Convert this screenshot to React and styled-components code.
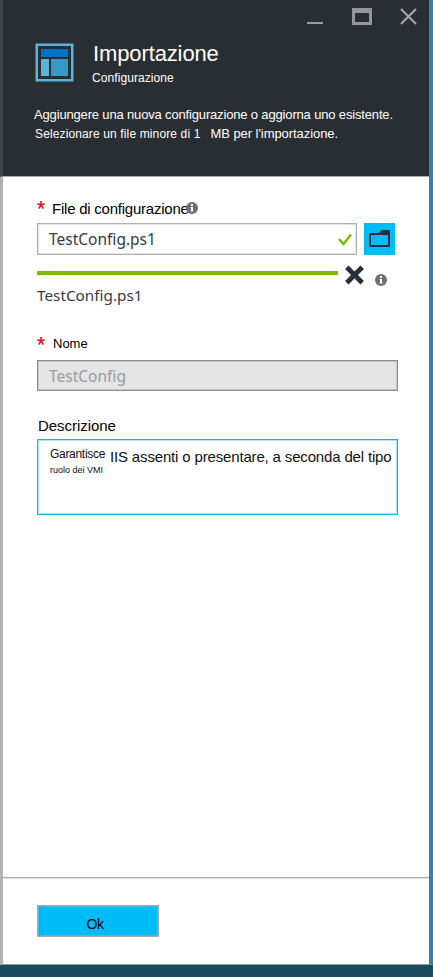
import React from "react";
import styled, { createGlobalStyle } from "styled-components";

const GlobalStyle = createGlobalStyle`
  * { box-sizing: border-box; }
  body { margin: 0; font-family: "Liberation Sans", Arial, sans-serif; }
  svg { display: block; flex: none; }
`;

const Page = styled.div`
  width: 433px;
  height: 977px;
  display: flex;
  flex-direction: column;
  overflow: hidden;
  background: #1b4b63;
`;

const Blade = styled.main`
  height: 965px;
  display: flex;
  flex-direction: column;
  border-left: 3px solid #b2b2b2;
  border-right: 4px solid #3780a7;
  border-bottom: 1px solid #8f9a9d;
  background: #fff;
`;

const Header = styled.header`
  height: 177px;
  margin-left: -3px;
  padding: 7px 11px 0 32px;
  border-left: 3px solid #414649;
  border-bottom: 1px solid #aaa;
  background: #292e32;
  color: #fff;
`;

const WindowControls = styled.div`
  height: 19px;
  display: flex;
  justify-content: flex-end;
`;

const TitleRow = styled.div`
  display: flex;
  height: 40px;
  margin-top: 17px;
`;

const TitleText = styled.div`
  display: flex;
  flex-direction: column;
  margin-left: 18px;
`;

const Text = styled.span`
  display: block;
  white-space: pre;
  font-size: ${(p) => p.$size}px;
  line-height: ${(p) => p.$line || 16}px;
  letter-spacing: ${(p) => p.$spacing || 0}px;
  margin-left: ${(p) => p.$indent || 0}px;
`;

const Intro = styled.div`
  margin: 24px 0 0 -1px;
`;

const IntroLine = styled.div`
  display: flex;
  height: 19px;
`;

const Form = styled.section`
  height: 701px;
  padding: 22px 31px 0 34px;
  border-bottom: 1px solid #adadad;
  box-shadow: 0 1px 0 #dedede;
`;

const LabelRow = styled.div`
  display: flex;
  height: ${(p) => p.$height}px;
  color: #000;
`;

const Required = styled.span`
  width: 8px;
  height: 8px;
  margin: 2px 7px 0 0;
`;

const LabelHint = styled.span`
  margin: 3px 0 0 -3px;
`;

const FieldRow = styled.div`
  display: flex;
  gap: 7px;
`;

const Field = styled.div`
  width: ${(p) => p.$width}px;
  height: ${(p) => p.$height}px;
  display: flex;
  align-items: center;
  justify-content: space-between;
  padding: 0 4px 0 11px;
  border: 1px solid ${(p) => (p.$disabled ? "#8e8e8e" : "#b0b0b0")};
  box-shadow: inset 0 0 0 1px ${(p) => (p.$disabled ? "#c5c5c5" : "#e2e2e2")};
  background: ${(p) => (p.$disabled ? "#e5e5e5" : "#fff")};
  color: ${(p) => (p.$disabled ? "#999ba0" : "#363a45")};
`;

const FileText = styled(Text)`
  font-family: "Noto Sans", "Open Sans", sans-serif;
`;

const UploadedName = styled(FileText)`
  color: #363a45;
`;

const BrowseButton = styled.button`
  width: 31px;
  height: 32px;
  padding: 6px 4px;
  border: 0;
  background: #00bcf6;
`;

const UploadRow = styled.div`
  display: flex;
  height: 20px;
  margin-top: 10px;
`;

const Progress = styled.div`
  width: 301px;
  height: 4px;
  margin: 6px 7px 0 0;
  background: #7fba00;
`;

const StatusIcon = styled.span`
  margin: 9px 0 0 11px;
`;

const Description = styled.div`
  width: 361px;
  height: 76px;
  display: flex;
  padding: 6px 0 0 12px;
  border: 1px solid #00bcf2;
  box-shadow: inset 0 0 0 1px #a9e5f8;
  color: #111;
`;

const DescriptionStart = styled.div`
  width: 60px;
`;

const Footer = styled.footer`
  padding: 27px 34px;
`;

const OkButton = styled.button`
  width: 122px;
  height: 32px;
  padding: 5px 6px 0 0;
  border: 1px solid #aaa;
  box-shadow: inset 0 0 0 1px #45b9de;
  background: #00bcf6;
  color: #000;
  font: 14px/18px "Liberation Sans", Arial, sans-serif;
  letter-spacing: -0.5px;
`;

const InfoIcon = () => (
  <svg width="12" height="12" viewBox="0 0 12 12">
    <circle cx="6" cy="6" r="6" fill="#6c6f75" />
    <path d="M5 2h2v2H5zM4.5 5H7v3.5h.5V9.5h-3V8.5H5V6h-.5z" fill="#fff" />
  </svg>
);

const RequiredMark = () => (
  <Required>
    <svg width="8" height="8" viewBox="0 0 8 8" fill="none">
      <path d="M4 0v4M4 4L.3 2.8M4 4l3.7-1.2M4 4L1.7 7.4M4 4l2.3 3.4" stroke="#e81b2d" strokeWidth="1.7" />
    </svg>
  </Required>
);

export default function App() {
  return (
    <>
      <GlobalStyle />
      <Page>
        <Blade>
          <Header>
            <WindowControls>
              <svg width="112" height="19" viewBox="0 0 112 19" fill="none">
                <path d="M1 16h16" stroke="#9a9c9e" strokeWidth="2" />
                <path d="M46 1h20v17H46zM49 6v9h14V6z" fill="#95979a" fillRule="evenodd" />
                <path d="M95 2l15 15M110 2L95 17" stroke="#a2a4a6" strokeWidth="2.2" />
              </svg>
            </WindowControls>
            <TitleRow>
              <svg width="39" height="39" viewBox="0 0 39 39">
                <path d="M.5.5h38v38H.5zM3 3v33h33V3z" fill="#59b4d9" fillRule="evenodd" />
                <path d="M6 6h27v8H6z" fill="#0072c6" />
                <path d="M6 16h8v17H6z" fill="#59b4d9" />
                <path d="M16 16h17v17H16z" fill="#3999c6" />
              </svg>
              <TitleText>
                <Text $size={22} $line={22} $spacing={-0.12} $indent={1}>Importazione</Text>
                <Text $size={12} $line={27} $spacing={0.08}>Configurazione</Text>
              </TitleText>
            </TitleRow>
            <Intro>
              <IntroLine>
                <Text $size={13} $spacing={-0.16}>Aggiungere una nuova configurazione o aggiorna uno esistente.</Text>
              </IntroLine>
              <IntroLine>
                <Text $size={12} $spacing={0.13} $indent={1}>Selezionare un file minore di 1</Text>
                <Text $size={13} $spacing={-0.06} $indent={10}>MB per l'importazione.</Text>
              </IntroLine>
            </Intro>
          </Header>
          <Form>
            <LabelRow $height={24}>
              <RequiredMark />
              <Text $size={15} $line={20} $spacing={-0.23}>File di configurazione</Text>
              <LabelHint><InfoIcon /></LabelHint>
            </LabelRow>
            <FieldRow>
              <Field $width={320} $height={32}>
                <FileText $size={15.5} $line={28}>TestConfig.ps1</FileText>
                <svg width="14" height="13" viewBox="0 0 14 13" fill="none">
                  <path d="M1 6l4.5 5L13 1.5" stroke="#7fba00" strokeWidth="2.5" />
                </svg>
              </Field>
              <BrowseButton>
                <svg width="23" height="20" viewBox="0 0 23 20">
                  <path d="M2 4h9l2-2.5q.4-.5 1-.5h7q1 0 1 1v15q0 1-1 1H2q-1 0-1-1V5q0-1 1-1zM3 6v10h17V6z" fill="#292e38" fillRule="evenodd" />
                </svg>
              </BrowseButton>
            </FieldRow>
            <UploadRow>
              <Progress />
              <svg width="19" height="20" viewBox="0 0 19 20">
                <path d="M1.8 2.3l15.4 15.4M17.2 2.3L1.8 17.7" stroke="#292e38" strokeWidth="4.9" />
              </svg>
              <StatusIcon><InfoIcon /></StatusIcon>
            </UploadRow>
            <LabelRow $height={50}>
              <UploadedName $size={15.3} $line={21}>TestConfig.ps1</UploadedName>
            </LabelRow>
            <LabelRow $height={25}>
              <RequiredMark />
              <Text $size={13} $line={17} $indent={1}>Nome</Text>
            </LabelRow>
            <Field $width={361} $height={31} $disabled>
              <FileText $size={15.5} $line={28}>TestConfig</FileText>
            </Field>
            <LabelRow $height={48}>
              <Text $size={15} $line={70} $spacing={-0.05} $indent={1}>Descrizione</Text>
            </LabelRow>
            <Description>
              <DescriptionStart>
                <Text $size={12} $line={17} $spacing={-0.3}>Garantisce</Text>
                <Text $size={9} $line={14}>ruolo dei VMI</Text>
              </DescriptionStart>
              <Text $size={15} $line={22} $spacing={-0.16}>IIS assenti o presentare, a seconda del tipo</Text>
            </Description>
          </Form>
          <Footer><OkButton>Ok</OkButton></Footer>
        </Blade>
      </Page>
    </>
  );
}
